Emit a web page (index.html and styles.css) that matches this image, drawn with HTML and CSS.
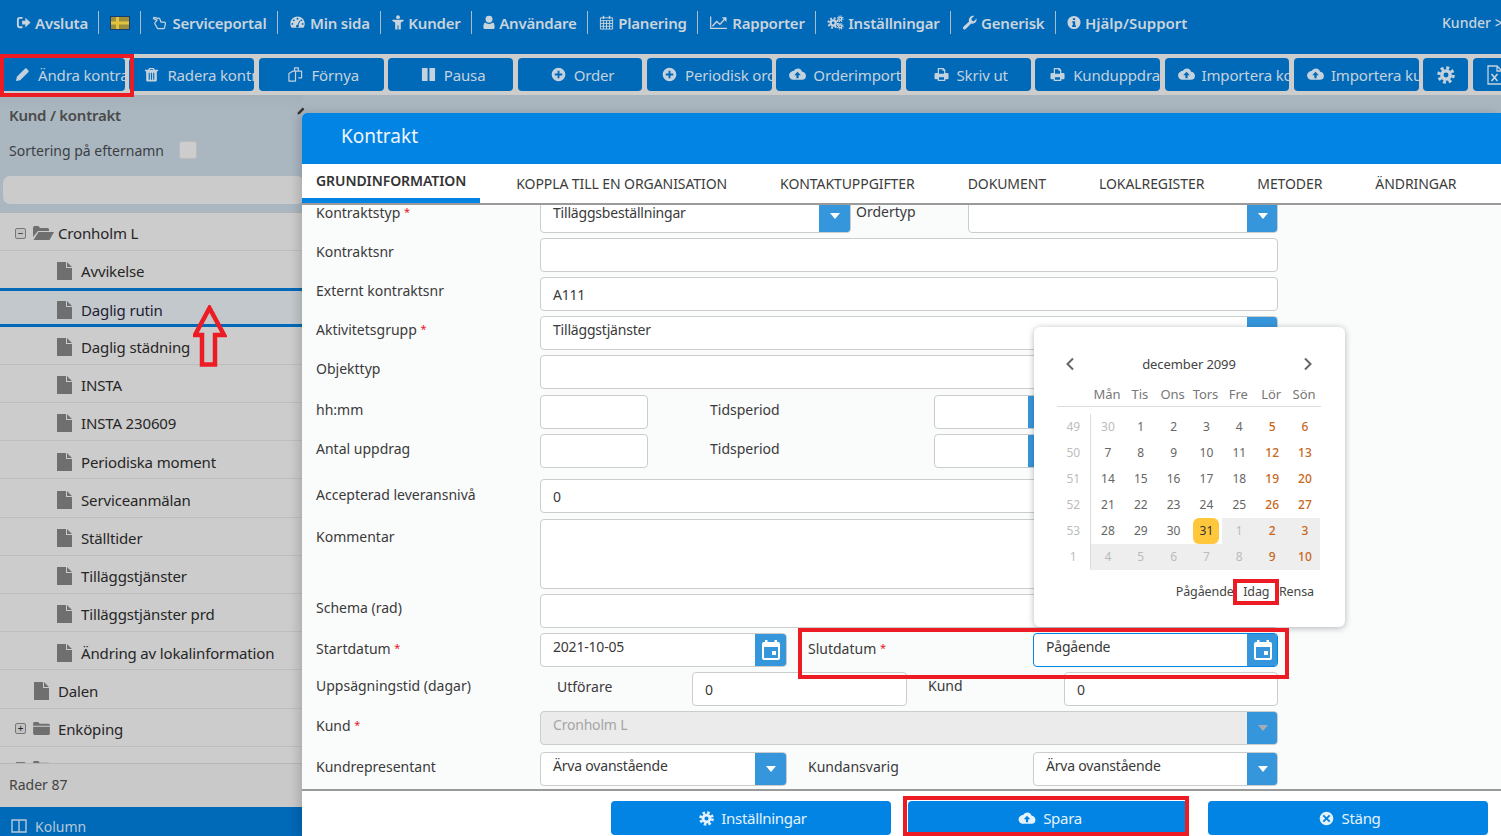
FILE: index.html
```html
<!DOCTYPE html>
<html lang="sv">
<head>
<meta charset="utf-8">
<title>Kontrakt</title>
<link rel="stylesheet" href="styles.css">
</head>
<body>
<svg class="sprite" width="0" height="0" aria-hidden="true">
  <symbol id="i-exit" viewBox="0 0 16 16"><path d="M1 5a3 3 0 0 1 3-3h3v2H4a1 1 0 0 0-1 1v6a1 1 0 0 0 1 1h3v2H4a3 3 0 0 1-3-3z"/><path d="M6.500 6H10V2.800L15.500 8 10 13.200V10H6.500z"/></symbol>
  <symbol id="i-hand" viewBox="0 0 16 16"><path fill="none" stroke="currentColor" stroke-width="1.300" stroke-linejoin="round" d="M5.500 14.500h6c1 0 1.500-.6 1.500-1.500l.8-4c.1-1-.5-1.500-1.300-1.500H9L8 4.500C7.700 3.500 6.800 3 6 3.500L1.500 2.500 1 4l4 1.500L3 7.500c-.7.8-.8 1.600-.3 2.300z"/></symbol>
  <symbol id="i-gauge" viewBox="0 0 16 16"><path fill-rule="evenodd" d="M8 1.500A7.700 7.700 0 0 0 .3 9.200c0 1.700.5 3.200 1.400 4.500h12.600c.9-1.300 1.400-2.800 1.400-4.500A7.700 7.700 0 0 0 8 1.500zM8 3a1 1 0 1 1 0 2 1 1 0 0 1 0-2zM4 4.700a1 1 0 1 1 0 2 1 1 0 0 1 0-2zM12 4.700a1 1 0 1 1 0 2 1 1 0 0 1 0-2zM2.500 8.500a1 1 0 1 1 0 2 1 1 0 0 1 0-2zM13.500 8.500a1 1 0 1 1 0 2 1 1 0 0 1 0-2zM10 6l1 .5-2 4.200a1.500 1.500 0 1 1-1-.4z"/></symbol>
  <symbol id="i-male" viewBox="0 0 12 16"><circle cx="6" cy="2.300" r="2"/><path d="M0 5h12v1.500L9 8v7.500H6.500V11h-1v4.500H3V8L0 6.500z"/></symbol>
  <symbol id="i-user" viewBox="0 0 12 16"><circle cx="6" cy="4.500" r="3.700"/><path d="M1.800 8C2.800 9 4.300 9.500 6 9.500S9.200 9 10.200 8c1.200.5 1.800 2.500 1.800 5 0 1.300-.8 2-2 2H2c-1.200 0-2-.7-2-2 0-2.500.6-4.500 1.800-5z"/></symbol>
  <symbol id="i-cal" viewBox="0 0 16 16"><path fill="none" stroke="currentColor" stroke-width="1" d="M1.500 3h13v12h-13zM1.500 6h13M1.500 9h13M1.500 12h13M4.700 6v9M8 6v9M11.300 6v9"/><path d="M4 .8h1.500v3.500H4zM10.500.8H12v3.500h-1.500z"/></symbol>
  <symbol id="i-chart" viewBox="0 0 18 16"><path d="M0 1.500h1.300v12.200H18V15H0z"/><path fill="none" stroke="currentColor" stroke-width="1.500" d="M2.500 12l4.500-5 3.500 3L16 4"/><path d="M12.500 2.500H17.500V7.500z"/></symbol>
  <symbol id="i-cogs" viewBox="0 0 18 16"><g fill="none" stroke="currentColor"><circle cx="6.500" cy="8.500" r="2.700" stroke-width="2.400"/><circle cx="6.500" cy="8.500" r="5" stroke-width="2.200" stroke-dasharray="2 1.930"/><circle cx="14" cy="4" r="1.600" stroke-width="1.500"/><circle cx="14" cy="4" r="3" stroke-width="1.300" stroke-dasharray="1.200 1.160"/><circle cx="14" cy="12" r="1.600" stroke-width="1.500"/><circle cx="14" cy="12" r="3" stroke-width="1.300" stroke-dasharray="1.200 1.160"/></g></symbol>
  <symbol id="i-wrench" viewBox="0 0 16 16"><path d="M15.500 3.800c.3 1.600-.2 3.200-1.300 4.300-1.200 1.200-2.900 1.500-4.400 1L4 15a1.800 1.800 0 0 1-3-1.200c0-.5.2-.9.500-1.200l6-5.800c-.5-1.500-.2-3.200 1-4.400C9.700 1.200 11.300.7 12.900 1L10 4l.5 2.200 2.200.5z"/></symbol>
  <symbol id="i-info" viewBox="0 0 16 16"><path fill-rule="evenodd" d="M8 .5a7.500 7.500 0 1 0 0 15 7.500 7.500 0 0 0 0-15zM6.700 3h2.600v2.200H6.700zM6 6.500h3.300V11.200H10.200V13H5.800V11.200H6.700V8.300H6z"/></symbol>
  <symbol id="i-pencil" viewBox="0 0 16 16"><path d="M1 15l1-4.500L10.800 1.700a1 1 0 0 1 1.400 0l2.100 2.100a1 1 0 0 1 0 1.400L5.500 14z"/></symbol>
  <symbol id="i-trash" viewBox="0 0 16 16"><path fill-rule="evenodd" d="M5.500 1h5l1 2H15v1.500h-1.300V14a1.500 1.500 0 0 1-1.500 1.500H3.800A1.500 1.500 0 0 1 2.300 14V4.500H1V3h3.500zM6 3h4l-.4-.8H6.400zM5 6v7.500h1.200V6zM7.400 6v7.500h1.200V6zM9.800 6v7.500H11V6z"/></symbol>
  <symbol id="i-files" viewBox="0 0 16 16"><path fill="none" stroke="currentColor" stroke-width="1.300" stroke-linejoin="round" d="M7 4.500V1H11v3.500h3.500V11.500H11M1 7l4-2.500h3V15H1zM8 4.500h3"/></symbol>
  <symbol id="i-pause" viewBox="0 0 16 16"><rect x="1" y="1" width="6" height="14" rx=".7"/><rect x="9" y="1" width="6" height="14" rx=".7"/></symbol>
  <symbol id="i-plus" viewBox="0 0 16 16"><path fill-rule="evenodd" d="M8 .7a7.300 7.300 0 1 0 0 14.600A7.300 7.300 0 0 0 8 .7zM7 4h2v3h3v2H9v3H7V9H4V7h3z"/></symbol>
  <symbol id="i-cloud" viewBox="0 0 18 16"><path fill-rule="evenodd" d="M9.500 1.500c2.200 0 4 1.500 4.400 3.600 2.300.1 4.100 2 4.100 4.200A4.200 4.200 0 0 1 13.800 13.500H4.500A4.500 4.500 0 0 1 0 9c0-1.900 1.200-3.500 2.900-4.200.6-.6 1.300-.6 2-.5.800-1.600 2.600-2.800 4.600-2.800zM9 5l-3.500 3.700h2.300V12h2.400V8.700h2.300z"/></symbol>
  <symbol id="i-print" viewBox="0 0 16 16"><path fill-rule="evenodd" d="M4 1h6l2 2v3.500h2a1.500 1.500 0 0 1 1.500 1.500v4a1 1 0 0 1-1 1H12v2H4v-2H1.500a1 1 0 0 1-1-1V8A1.500 1.500 0 0 1 2 6.500h2zM5.300 2.300v5h5.400V4H9V2.300zM5.300 11v2.700h5.400V11z"/></symbol>
  <symbol id="i-gear" viewBox="0 0 16 16"><g fill="none" stroke="currentColor"><circle cx="8" cy="8" r="3.700" stroke-width="3"/><circle cx="8" cy="8" r="6.300" stroke-width="3" stroke-dasharray="2.600 2.350"/></g></symbol>
  <symbol id="i-xls" viewBox="0 0 16 20"><path fill="none" stroke="currentColor" stroke-width="1.300" d="M1 1h9l5 5v13H1zM10 1v5h5"/><path fill="none" stroke="currentColor" stroke-width="1.700" d="M4.500 9l6 7M10.500 9l-6 7"/></symbol>
  <symbol id="i-close" viewBox="0 0 16 16"><path fill-rule="evenodd" d="M8 .7a7.300 7.300 0 1 0 0 14.600A7.300 7.300 0 0 0 8 .7zM5.300 3.900 8 6.600l2.700-2.700 1.400 1.400L9.400 8l2.700 2.700-1.400 1.400L8 9.400l-2.700 2.700-1.400-1.400L6.600 8 3.900 5.300z"/></symbol>
  <symbol id="i-event" viewBox="0 0 20 22"><path fill-rule="evenodd" d="M4 1h2.500v2h7V1H16v2h1a2 2 0 0 1 2 2v14a2 2 0 0 1-2 2H3a2 2 0 0 1-2-2V5a2 2 0 0 1 2-2h1zM3 8v11h14V8zM11 12h4v4h-4z"/></symbol>
  <symbol id="i-file" viewBox="0 0 15 18"><path d="M0 0h9v6h6v12H0zM10 0l5 5h-5z"/></symbol>
  <symbol id="i-folder" viewBox="0 0 18 14"><path d="M0 1.500A1.500 1.500 0 0 1 1.500 0h4L7 2h9.500A1.500 1.500 0 0 1 18 3.500V4H0zM0 5h18v7.500a1.500 1.500 0 0 1-1.500 1.500h-15A1.500 1.500 0 0 1 0 12.500z"/></symbol>
  <symbol id="i-open" viewBox="0 0 21 14"><path d="M0 1.500A1.500 1.500 0 0 1 1.500 0h4L7 2h7.500A1.500 1.500 0 0 1 16 3.500V5H5L0 11z"/><path d="M5.500 6H21l-4.500 8H.5z"/></symbol>
  <symbol id="i-col" viewBox="0 0 16 14"><path fill="none" stroke="currentColor" stroke-width="1.400" d="M1 1h14v12H1zM8 1v12"/></symbol>
</svg>

<div class="page">
  <nav class="topnav">
    <a class="nav-item"><svg class="ic n-15"><use href="#i-exit"/></svg>Avsluta</a>
    <a class="nav-item"><svg class="flag" viewBox="0 0 20 14"><rect width="20" height="14" fill="#1c3a6e"/><rect x="1" y="1" width="18" height="12" fill="#9c8f3c"/><rect x="1" y="5.500" width="18" height="3" fill="#e0c440"/><rect x="6" y="1" width="3" height="12" fill="#e0c440"/></svg></a>
    <a class="nav-item"><svg class="ic n-16"><use href="#i-hand"/></svg>Serviceportal</a>
    <a class="nav-item"><svg class="ic n-17"><use href="#i-gauge"/></svg>Min sida</a>
    <a class="nav-item"><svg class="ic n-12"><use href="#i-male"/></svg>Kunder</a>
    <a class="nav-item"><svg class="ic n-12"><use href="#i-user"/></svg>Användare</a>
    <a class="nav-item"><svg class="ic n-15"><use href="#i-cal"/></svg>Planering</a>
    <a class="nav-item"><svg class="ic n-19"><use href="#i-chart"/></svg>Rapporter</a>
    <a class="nav-item"><svg class="ic n-17"><use href="#i-cogs"/></svg>Inställningar</a>
    <a class="nav-item"><svg class="ic n-15"><use href="#i-wrench"/></svg>Generisk</a>
    <a class="nav-item"><svg class="ic n-14"><use href="#i-info"/></svg>Hjälp/Support</a>
    <span class="nav-right">Kunder &gt;</span>
  </nav>

  <div class="toolbar">
    <button class="tool"><svg class="ic"><use href="#i-pencil"/></svg>Ändra kontrakt</button>
    <button class="tool"><svg class="ic"><use href="#i-trash"/></svg>Radera kontrakt</button>
    <button class="tool tool-c"><svg class="ic"><use href="#i-files"/></svg>Förnya</button>
    <button class="tool tool-c"><svg class="ic"><use href="#i-pause"/></svg>Pausa</button>
    <button class="tool tool-c"><svg class="ic"><use href="#i-plus"/></svg>Order</button>
    <button class="tool"><svg class="ic"><use href="#i-plus"/></svg>Periodisk order</button>
    <button class="tool"><svg class="ic ic-w"><use href="#i-cloud"/></svg>Orderimport</button>
    <button class="tool tool-c"><svg class="ic"><use href="#i-print"/></svg>Skriv ut</button>
    <button class="tool"><svg class="ic"><use href="#i-print"/></svg>Kunduppdrag</button>
    <button class="tool"><svg class="ic ic-w"><use href="#i-cloud"/></svg>Importera kontrakt</button>
    <button class="tool"><svg class="ic ic-w"><use href="#i-cloud"/></svg>Importera kunder</button>
    <button class="tool tool-sq"><svg class="ic ic-l"><use href="#i-gear"/></svg></button>
    <button class="tool tool-sq"><svg class="ic ic-x"><use href="#i-xls"/></svg></button>
  </div>

  <div class="content">
    <aside class="side">
      <div class="side-head">
        <div class="side-title"><span>Kund / kontrakt</span><svg class="side-pin"><use href="#i-pencil"/></svg></div>
        <label class="side-sort">Sortering på efternamn<span class="check"></span></label>
        <div class="search"></div>
      </div>
      <ul class="tree">
        <li class="node node-top"><span class="tog">−</span><svg class="fold-o"><use href="#i-open"/></svg>Cronholm L</li>
        <li class="node lv2"><svg class="file"><use href="#i-file"/></svg>Avvikelse</li>
        <li class="node lv2 sel"><svg class="file"><use href="#i-file"/></svg>Daglig rutin</li>
        <li class="node lv2"><svg class="file"><use href="#i-file"/></svg>Daglig städning</li>
        <li class="node lv2"><svg class="file"><use href="#i-file"/></svg>INSTA</li>
        <li class="node lv2"><svg class="file"><use href="#i-file"/></svg>INSTA 230609</li>
        <li class="node lv2"><svg class="file"><use href="#i-file"/></svg>Periodiska moment</li>
        <li class="node lv2"><svg class="file"><use href="#i-file"/></svg>Serviceanmälan</li>
        <li class="node lv2"><svg class="file"><use href="#i-file"/></svg>Ställtider</li>
        <li class="node lv2"><svg class="file"><use href="#i-file"/></svg>Tilläggstjänster</li>
        <li class="node lv2"><svg class="file"><use href="#i-file"/></svg>Tilläggstjänster prd</li>
        <li class="node lv2"><svg class="file"><use href="#i-file"/></svg>Ändring av lokalinformation</li>
        <li class="node lv1"><svg class="file"><use href="#i-file"/></svg>Dalen</li>
        <li class="node"><span class="tog">+</span><svg class="fold"><use href="#i-folder"/></svg>Enköping</li>
        <li class="node"><span class="tog">+</span><svg class="fold"><use href="#i-folder"/></svg></li>
      </ul>
      <div class="side-foot">Rader 87</div>
      <div class="side-col"><svg class="col-ic"><use href="#i-col"/></svg>Kolumn</div>
    </aside>
  </div>
</div>

<section class="modal">
  <header class="modal-head">Kontrakt</header>
  <div class="tabs">
    <span class="tab tab-on">GRUNDINFORMATION</span>
    <span class="tab">KOPPLA TILL EN ORGANISATION</span>
    <span class="tab">KONTAKTUPPGIFTER</span>
    <span class="tab">DOKUMENT</span>
    <span class="tab">LOKALREGISTER</span>
    <span class="tab">METODER</span>
    <span class="tab">ÄNDRINGAR</span>
  </div>

  <div class="form-wrap">
    <form class="form">
      <div class="row">
        <label class="lbl lbl-up">Kontraktstyp <em>*</em></label>
        <div class="ctl w-311"><span class="val up">Tilläggsbeställningar</span><span class="addon"><i class="caret"></i></span></div>
        <label class="lbl lbl-order">Ordertyp</label>
        <div class="ctl w-310"><span class="val"></span><span class="addon"><i class="caret"></i></span></div>
      </div>
      <div class="row"><label class="lbl">Kontraktsnr</label><div class="ctl w-full"></div></div>
      <div class="row"><label class="lbl">Externt kontraktsnr</label><div class="ctl w-full"><span class="val">A111</span></div></div>
      <div class="row">
        <label class="lbl lbl-up">Aktivitetsgrupp <em>*</em></label>
        <div class="ctl w-full"><span class="val up">Tilläggstjänster</span><span class="addon"><i class="caret"></i></span></div>
      </div>
      <div class="row"><label class="lbl">Objekttyp</label><div class="ctl w-full"></div></div>
      <div class="row row-30">
        <label class="lbl">hh:mm</label><div class="ctl w-108"></div>
        <label class="lbl lbl-tid">Tidsperiod</label>
        <div class="ctl w-126"><span class="val"></span><span class="addon"></span></div>
      </div>
      <div class="row row-30">
        <label class="lbl">Antal uppdrag</label><div class="ctl w-108"></div>
        <label class="lbl lbl-tid">Tidsperiod</label>
        <div class="ctl w-126"><span class="val"></span><span class="addon"></span></div>
      </div>
      <div class="row row-gap"><label class="lbl lbl-low">Accepterad leveransnivå</label><div class="ctl w-full"><span class="val">0</span></div></div>
      <div class="row row-tall"><label class="lbl lbl-lower">Kommentar</label><div class="ctl w-full"></div></div>
      <div class="row"><label class="lbl">Schema (rad)</label><div class="ctl w-full"></div></div>
      <div class="row row-30">
        <label class="lbl">Startdatum <em>*</em></label>
        <div class="ctl w-247"><span class="val up">2021-10-05</span><span class="addon"><svg class="ev"><use href="#i-event"/></svg></span></div>
        <label class="lbl lbl-mid">Slutdatum <em>*</em></label>
        <div class="ctl w-245 ctl-focus"><span class="val up">Pågående</span><span class="addon"><svg class="ev"><use href="#i-event"/></svg></span></div>
      </div>
      <div class="row">
        <label class="lbl">Uppsägningstid (dagar)</label>
        <label class="lbl lbl-utf">Utförare</label>
        <div class="ctl w-215"><span class="val">0</span></div>
        <label class="lbl lbl-kund">Kund</label>
        <div class="ctl w-214"><span class="val">0</span></div>
      </div>
      <div class="row">
        <label class="lbl">Kund <em>*</em></label>
        <div class="ctl w-full ctl-off"><span class="val up">Cronholm L</span><span class="addon"><i class="caret caret-off"></i></span></div>
      </div>
      <div class="row row-last row-30">
        <label class="lbl">Kundrepresentant</label>
        <div class="ctl w-247"><span class="val up">Ärva ovanstående</span><span class="addon"><i class="caret"></i></span></div>
        <label class="lbl lbl-mid">Kundansvarig</label>
        <div class="ctl w-245"><span class="val up">Ärva ovanstående</span><span class="addon"><i class="caret"></i></span></div>
      </div>
    </form>
  </div>

  <footer class="modal-foot">
    <button class="act"><svg class="ic"><use href="#i-gear"/></svg>Inställningar</button>
    <button class="act"><svg class="ic ic-w"><use href="#i-cloud"/></svg>Spara</button>
    <button class="act"><svg class="ic"><use href="#i-close"/></svg>Stäng</button>
  </footer>

  <div class="picker">
    <div class="pk-head">
      <svg class="pk-nav" viewBox="0 0 10 14"><path d="M8 1.500 2.500 7 8 12.500" fill="none" stroke="currentColor" stroke-width="2"/></svg>
      <span>december 2099</span>
      <svg class="pk-nav" viewBox="0 0 10 14"><path d="M2 1.500 7.500 7 2 12.500" fill="none" stroke="currentColor" stroke-width="2"/></svg>
    </div>
    <div class="pk-days"><span></span><span>Mån</span><span>Tis</span><span>Ons</span><span>Tors</span><span>Fre</span><span>Lör</span><span>Sön</span></div>
    <div class="pk-grid">
      <span class="wk">49</span><span class="out">30</span><span>1</span><span>2</span><span>3</span><span>4</span><span class="we">5</span><span class="we">6</span>
      <span class="wk">50</span><span>7</span><span>8</span><span>9</span><span>10</span><span>11</span><span class="we">12</span><span class="we">13</span>
      <span class="wk">51</span><span>14</span><span>15</span><span>16</span><span>17</span><span>18</span><span class="we">19</span><span class="we">20</span>
      <span class="wk">52</span><span>21</span><span>22</span><span>23</span><span>24</span><span>25</span><span class="we">26</span><span class="we">27</span>
      <span class="wk">53</span><span>28</span><span>29</span><span>30</span><span class="today"><b>31</b></span><span class="out sh">1</span><span class="we sh">2</span><span class="we sh">3</span>
      <span class="wk">1</span><span class="out sh">4</span><span class="out sh">5</span><span class="out sh">6</span><span class="out sh">7</span><span class="out sh">8</span><span class="we sh">9</span><span class="we sh">10</span>
    </div>
    <div class="pk-foot"><span>Pågående</span><span>Idag</span><span>Rensa</span></div>
  </div>
</section>

<div class="mark mark-edit"></div>
<div class="mark mark-idag"></div>
<div class="mark mark-slut"></div>
<div class="mark mark-spara"></div>
<svg class="arrow" viewBox="0 0 34 63"><path d="M16.500 3 31 30H22V59.500H9V30H2z" fill="none" stroke="#ed1c24" stroke-width="4.500"/></svg>
</body>
</html>
```
FILE: styles.css
```css
* { box-sizing: border-box; }
html, body { margin: 0; padding: 0; }
body {
  width: 1501px;
  height: 836px;
  overflow: hidden;
  position: relative;
  font-family: "Noto Sans", "Open Sans", sans-serif;
  font-size: 14px;
  color: #333;
  background: #a9b6c0;
}
.sprite { position: absolute; }
.page { display: flex; flex-direction: column; height: 836px; }
svg { fill: currentColor; }
.ic { width: 15px; height: 15px; flex: none; }
.ic-w { width: 18px; }
.ic-l { width: 18px; height: 18px; }
.ic-x { width: 16px; height: 20px; }
.n-12 { width: 12px; }
.n-14 { width: 14px; }
.n-15 { width: 15px; }
.n-16 { width: 16px; }
.n-17 { width: 17px; }
.n-19 { width: 19px; }

/* Top nav */
.topnav {
  height: 54px;
  background: #0069b8;
  display: flex;
  align-items: center;
  padding: 0 0 9px 16px;
  color: #c9d4dd;
  font-size: 15px;
  font-weight: 600;
  letter-spacing: -.2px;
  flex: none;
}
.nav-item {
  display: flex;
  align-items: center;
  gap: 4px;
  height: 23px;
  padding-right: 10.500px;
  margin-right: 11px;
  border-right: 1px solid #a8bccb;
  white-space: nowrap;
}
.nav-item:first-child { margin-right: 10.500px; }
.nav-item:nth-child(11) { border-right: 0; letter-spacing: 0; }
.flag { width: 20px; height: 14px; display: block; }
.nav-right { margin-left: auto; white-space: nowrap; width: 59px; overflow: hidden; font-size: 14px; font-weight: 500; letter-spacing: 0; }

/* Toolbar */
.toolbar {
  height: 41px;
  flex: none;
  background: #cdcdcd;
  display: flex;
  gap: 4.500px;
  padding: 4px 0 0 0;
  overflow: hidden;
}
.tool {
  flex: none;
  width: 124.900px;
  height: 33px;
  border: 0;
  border-radius: 4px;
  background: #0069b8;
  color: #c4d2dd;
  font: 15px "Noto Sans", "Open Sans", sans-serif;
  letter-spacing: -.15px;
  display: flex;
  align-items: center;
  gap: 8px;
  padding: 0 0 0 15px;
  overflow: hidden;
  white-space: nowrap;
}
.tool .ic-w { width: 17px; margin: 0 -1px 0 -2px; }
.tool-c { justify-content: center; padding: 0 0 0 5px; }
.tool-sq { width: 45px; justify-content: center; padding: 0; }

/* Sidebar */
.content { flex: 1; display: flex; min-height: 0; }
.side { width: 302px; flex: none; display: flex; flex-direction: column; min-height: 0; background: #cccccc; }
.side-head { height: 118px; flex: none; background: linear-gradient(#a4b1bb, #aab7c1 18px); border-bottom: 1px solid #b0b4b8; padding: 9px 0 0 0; }
.side-title { display: flex; justify-content: space-between; align-items: center; padding-left: 9px; font-size: 15px; font-weight: 600; letter-spacing: -.25px; color: #4a4a4a; height: 22px; }
.side-pin { width: 8px; height: 8px; color: #333; margin-top: -8px; margin-right: -3px; }
.side-sort { display: flex; align-items: center; padding-left: 9px; margin-top: 12px; height: 24px; font-size: 14px; color: #3c3f42; }
.check { width: 18px; height: 18px; margin-left: 15px; background: #cdcdcd; border: 1px solid #b9bcbe; border-radius: 3px; }
.search { height: 28px; margin: 14px -2px 0 3px; background: #cbcbcb; border-radius: 7px; }
.tree { list-style: none; margin: 0; padding: 0; flex: 1; min-height: 0; overflow: hidden; }
.node {
  height: 38.200px;
  display: flex;
  align-items: center;
  padding-left: 15px;
  padding-top: 3.500px;
  border-bottom: 1px solid #bdbdbd;
  font-size: 15px;
  letter-spacing: -.15px;
  color: #262626;
  white-space: nowrap;
}
.node-top { height: 37.500px; }
.lv1 { padding-left: 34px; }
.lv2 { padding-left: 57px; }
.node.sel { background: #c3c8cc; border-top: 3px solid #0069b8; border-bottom: 3px solid #0069b8; margin-top: -1px; height: 39px; padding-top: 5px; color: #1d1d33; }
.tog {
  width: 11px; height: 11px;
  border: 1px solid #777;
  background: #c2c2c2;
  border-radius: 2px;
  font-size: 10px;
  line-height: 8px;
  text-align: center;
  color: #222;
  margin-right: 7px;
  flex: none;
}
.fold-o { width: 21px; height: 14px; color: #6f6f6f; margin-right: 4px; flex: none; }
.fold { width: 17px; height: 13px; color: #6f6f6f; margin-right: 8px; flex: none; }
.file { width: 15px; height: 18px; color: #6f6f6f; margin-right: 9px; flex: none; }
.side-foot { height: 44px; flex: none; display: flex; align-items: center; padding: 0 0 2px 9px; background: #c9c9c9; border-top: 1px solid #b7b7b7; color: #444; font-size: 14px; }
.side-col { height: 29px; flex: none; background: #0069b8; color: #b6c8d6; display: flex; align-items: center; gap: 8px; padding: 9px 0 0 11px; font-size: 14px; }
.col-ic { width: 16px; height: 14px; }

/* Modal */
.modal {
  position: absolute;
  left: 302px; top: 113px; right: 0; bottom: 0;
  background: #fff;
  border-radius: 5px 0 0 0;
  box-shadow: -4px 0 10px rgba(0,0,0,.15);
  display: flex;
  flex-direction: column;
}
.modal-head { height: 51px; flex: none; background: #0284e4; color: #eef6fd; font-size: 19px; line-height: 47px; padding-left: 39px; border-radius: 5px 0 0 0; }
.tabs { height: 41px; flex: none; display: flex; border-bottom: 2px solid #9a9a9a; background: #fff; color: #3c3c3c; font-size: 14px; letter-spacing: -.08px; }
.tab { margin-left: 53px; padding-top: 10px; white-space: nowrap; }
.tab-on { margin: 0 -17px 0 0; padding: 7px 14px 0 14px; font-weight: 600; border-bottom: 5px solid #0284e4; height: 39px; color: #333; }
.form-wrap { flex: 1; min-height: 0; overflow: hidden; background: #fafbfb; }
.form { margin: -6.400px 0 0 14px; display: flex; flex-direction: column; gap: 5.200px; }
.row { display: flex; height: 34px; flex: none; }
.row-gap { margin-top: 5.600px; }
.row-tall { height: 70px; margin-top: 1px; }
.row-last { margin-top: 1px; }
.lbl { width: 224px; flex: none; line-height: 28px; font-size: 14px; color: #3a3a3a; white-space: nowrap; }
.row-30 .lbl { line-height: 30px; }
.lbl em { color: #e8151b; font-style: normal; font-size: 11px; vertical-align: 2px; }
.lbl-up { line-height: 26px; }
.lbl-low { line-height: 32px; }
.lbl-lower { line-height: 36px; }
.lbl-order { width: 112px; margin-left: 5px; line-height: 26px; }
.lbl-tid { margin-left: 62px; }
.lbl-mid { width: 225px; margin-left: 21px; }
.lbl-utf { width: 135px; margin-left: 17px; line-height: 30px; }
.lbl-kund { width: 136px; margin-left: 21px; line-height: 28px; }
.ctl { display: flex; flex: none; background: #fff; border: 1px solid #ccc; border-radius: 4px; overflow: hidden; }
.ctl-focus { border-color: #0284e4; }
.ctl-off { background: #ebebeb; }
.ctl-off .val { color: #a5a5a5; }
.w-full { width: 738px; }
.w-311 { width: 311px; }
.w-310 { width: 310px; }
.w-108 { width: 108px; }
.w-126 { width: 126px; }
.w-247 { width: 247px; }
.w-245 { width: 245px; }
.w-215 { width: 215px; }
.w-214 { width: 214px; }
.val { flex: 1; padding: 0 0 0 12px; line-height: 33px; font-size: 14px; letter-spacing: -.2px; color: #3a3a3a; white-space: nowrap; }
.val.up { line-height: 25px; }
.addon { width: 32px; flex: none; margin: -1px -1px -1px 0; background: #3596dc; color: #fff; display: flex; align-items: center; justify-content: center; }
.w-245 .addon, .w-310 .addon, .w-full .addon { width: 31px; }
.caret { width: 0; height: 0; border: 5px solid transparent; border-top: 6px solid #fff; border-bottom: 0; }
.caret-off { border-top-color: #a5adb3; }
.ev { width: 20px; height: 22px; }
.modal-foot { height: 47px; flex: none; border-top: 2px solid #9a9a9a; background: #fff; display: flex; gap: 17px; padding: 10px 0 0 309px; }
.act {
  width: 280px; height: 34px;
  border: 0; border-radius: 4px;
  background: #0284e4;
  color: #e6f2fb;
  font: 15px "Noto Sans", "Open Sans", sans-serif;
  letter-spacing: -.3px;
  display: flex; align-items: center; justify-content: center; gap: 7px;
  padding: 0 0 0 4px;
}
.act:last-child { margin-left: 3px; }

/* Date picker */
.picker {
  position: absolute;
  left: 732px; top: 214px;
  width: 311px; height: 300px;
  background: #fff;
  border-radius: 6px;
  box-shadow: 0 1px 6px rgba(40,50,60,.35);
  padding: 26px 24px 0 23px;
  font-size: 12px;
  color: #666;
}
.pk-head { display: flex; justify-content: space-between; align-items: center; height: 22px; padding: 0 8px; font-size: 13px; letter-spacing: -.1px; color: #444; }
.pk-nav { width: 10px; height: 14px; color: #666; }
.pk-days { display: grid; grid-template-columns: 33.500px repeat(7, 32.850px); height: 24px; margin-top: 8px; padding-top: 1px; border-bottom: 1px solid #ddd; font-size: 13px; color: #777; text-align: center; line-height: 20px; letter-spacing: -.1px; }
.pk-grid { display: grid; grid-template-columns: 33.500px repeat(7, 32.850px); grid-auto-rows: 26px; margin-top: 7px; font-size: 12px; text-align: center; line-height: 26px; }
.pk-grid span:nth-child(8n+1) { border-right: 1px solid #ddd; }
.pk-grid span:not(.wk) { padding-left: 2px; }
.wk { color: #bdbdbd; }
.pk-grid .out { color: #bbb; }
.pk-grid .we { color: #c8661a; font-weight: 500; }
.pk-grid .sh { background: #eeeeee; }
.pk-grid .today { display: flex; align-items: center; justify-content: center; padding: 0; }
.today b { width: 26px; height: 26px; background: #ffc73b; border-radius: 6px; font-weight: 400; color: #333; }
.pk-foot { display: flex; justify-content: flex-end; gap: 9.500px; margin-top: 13px; font-size: 12.500px; letter-spacing: -.1px; color: #444; padding-right: 7px; }

/* Red annotation frames */
.mark { position: absolute; border: 4px solid #ed1c24; pointer-events: none; }
.mark-edit { left: 0; top: 54px; width: 134px; height: 43px; }
.mark-idag { left: 1233px; top: 579px; width: 46px; height: 26px; }
.mark-slut { left: 798px; top: 628px; width: 491px; height: 51px; }
.mark-spara { left: 903px; top: 796px; width: 286px; height: 40px; }
.arrow { position: absolute; left: 193px; top: 305px; width: 34px; height: 63px; }
```
